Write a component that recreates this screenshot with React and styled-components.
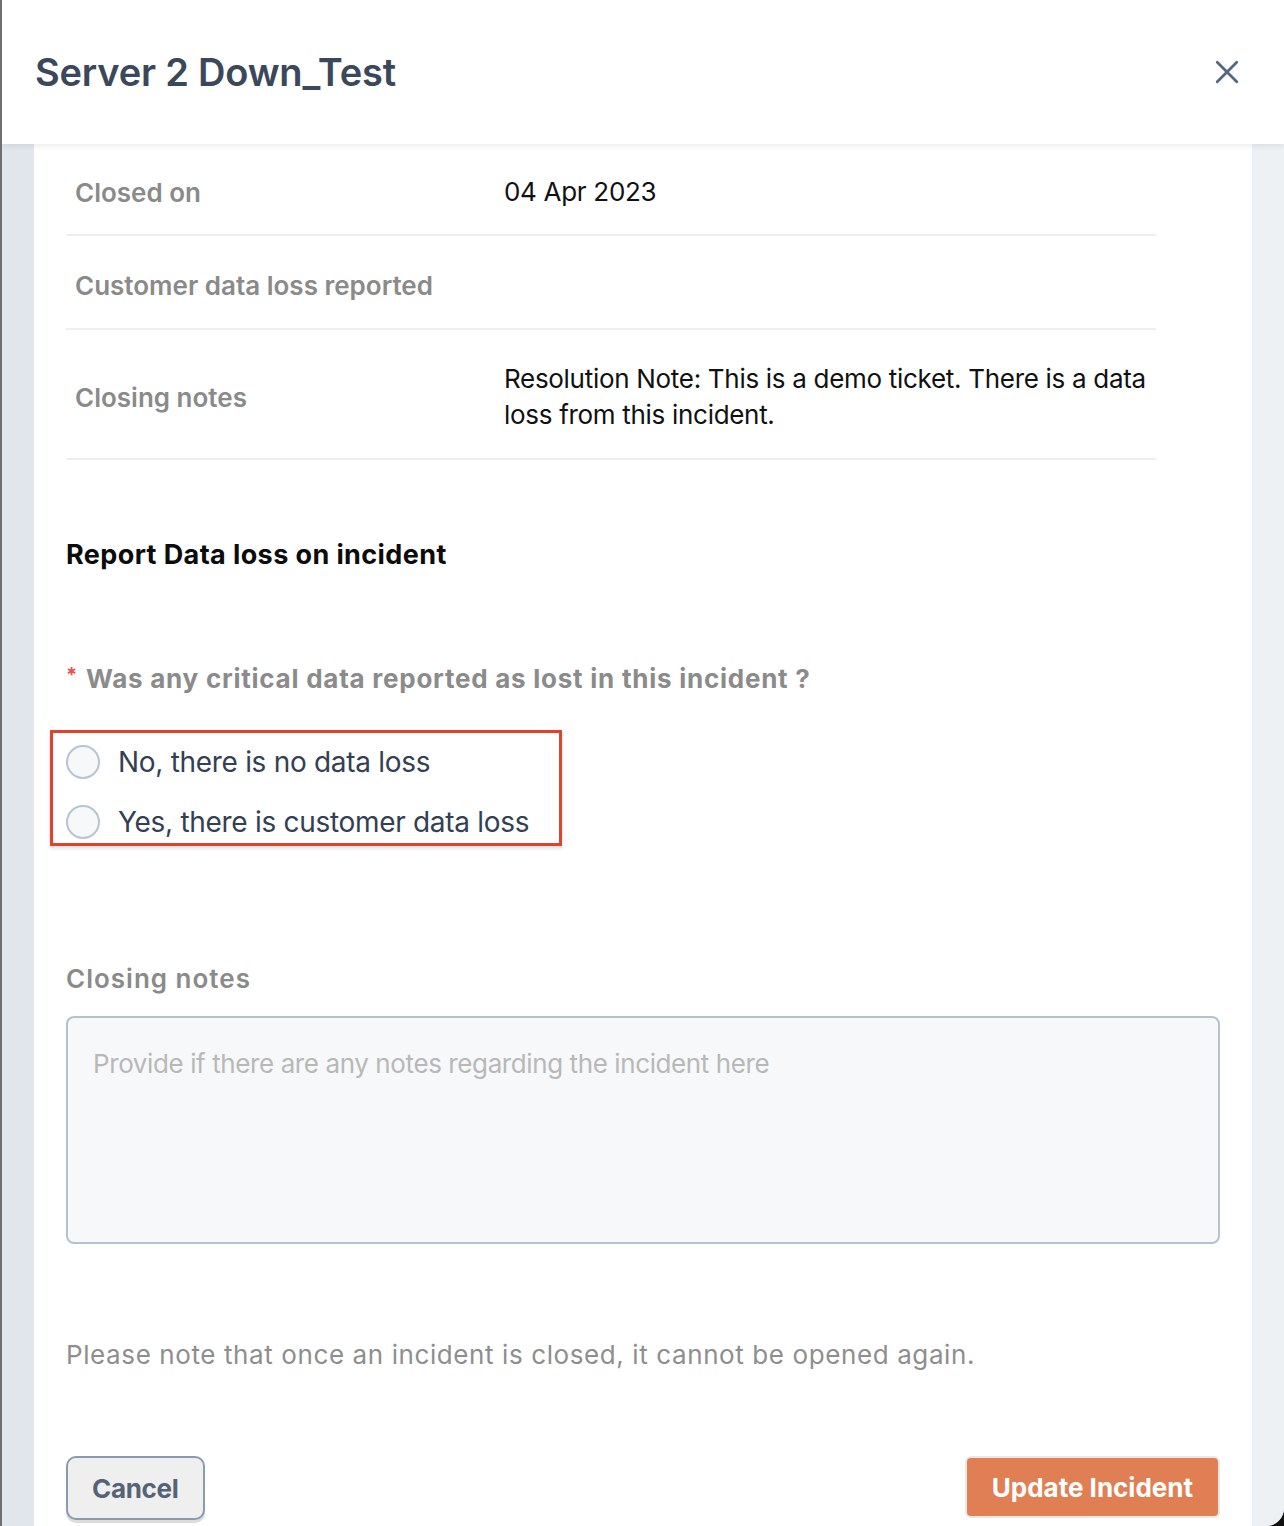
import React from "react";
import styled, { createGlobalStyle } from "styled-components";

const Global = createGlobalStyle`
  html, body {
    margin: 0;
    padding: 0;
    background: #111;
  }
  body {
    font-family: Inter, "Noto Sans", sans-serif;
    overflow: hidden;
  }
`;

const Frame = styled.div`
  width: 1284px;
  height: 1526px;
  box-sizing: border-box;
  border-left: 2px solid #6f6f6f;
  border-bottom-right-radius: 18px;
  overflow: hidden;
  background: #e6eaef;
  display: flex;
  flex-direction: column;
`;

const Header = styled.header`
  height: 144px;
  flex-shrink: 0;
  background: #fff;
  display: flex;
  align-items: center;
  justify-content: space-between;
  padding: 0 44px 0 33px;
  box-shadow: 0 2px 6px rgba(0, 0, 0, 0.08);
  position: relative;
  z-index: 2;
`;

const Title = styled.h1`
  margin: 0;
  font-size: 38px;
  font-weight: 600;
  letter-spacing: -0.2px;
  color: #3b475a;
`;

const CloseButton = styled.button`
  border: none;
  background: none;
  padding: 0;
  display: flex;
  color: #546781;
  cursor: pointer;
`;

const Side = styled.div`
  flex: 1;
  display: flex;
  padding: 0 32px;
  background: linear-gradient(90deg, #e1e6ec, #eef1f4);
`;

const Panel = styled.main`
  flex: 1;
  background: #fff;
  padding: 0 32px;
  display: flex;
  flex-direction: column;
`;

const DetailTable = styled.div`
  width: 1090px;
  display: flex;
  flex-direction: column;
`;

const Row = styled.div`
  display: grid;
  grid-template-columns: 429px 1fr;
  align-items: center;
  min-height: ${(p) => p.$h}px;
  border-bottom: 2px solid #efefef;
  box-sizing: border-box;
  padding: 6px 0 0 9px;
`;

const Label = styled.span`
  font-size: 26px;
  font-weight: 600;
  letter-spacing: 0;
  color: #8a8a8a;
`;

const Value = styled.span`
  font-size: 26px;
  line-height: 36px;
  letter-spacing: -0.3px;
  color: #111;
`;

const SectionTitle = styled.h2`
  margin: 78px 0 0;
  font-size: 27px;
  font-weight: 700;
  letter-spacing: 0.4px;
  color: #0c0c0c;
`;

const Question = styled.p`
  margin: 92px 0 0;
  font-size: 26px;
  font-weight: 700;
  letter-spacing: 0.75px;
  color: #8b8b8b;
`;

const Required = styled.span`
  color: #e5534b;
  font-size: 20px;
  vertical-align: top;
  margin-right: 8px;
`;

const Highlight = styled.div`
  margin: 36px 0 0 -16px;
  width: 512px;
  height: 116px;
  box-sizing: border-box;
  border: 3px solid #e0432c;
  box-shadow: 0 2px 4px rgba(0, 0, 0, 0.15);
  display: flex;
  flex-direction: column;
  gap: 24px;
  padding: 11px 0 0 13px;
`;

const Option = styled.label`
  display: flex;
  align-items: center;
  gap: 18px;
  font-size: 28px;
  letter-spacing: -0.3px;
  color: #333f52;
  height: 36px;
`;

const Circle = styled.span`
  width: 34px;
  height: 34px;
  box-sizing: border-box;
  border-radius: 50%;
  border: 2px solid #b7c4d2;
  background: #f6f8fa;
  flex-shrink: 0;
`;

const FieldLabel = styled.div`
  margin-top: 117px;
  font-size: 26px;
  font-weight: 600;
  letter-spacing: 1px;
  color: #8a8a8a;
`;

const Notes = styled.textarea`
  margin-top: 22px;
  width: 1154px;
  height: 228px;
  box-sizing: border-box;
  border: 2px solid #b4c2d0;
  border-radius: 8px;
  background: #f6f8fa;
  padding: 30px 25px;
  font-family: Inter, sans-serif;
  font-size: 26px;
  letter-spacing: -0.4px;
  resize: none;
  outline: none;
  &::placeholder {
    color: #b8b8b8;
  }
`;

const Note = styled.p`
  margin: 95px 0 0;
  font-size: 26px;
  letter-spacing: 0.6px;
  color: #8e8e8e;
`;

const Actions = styled.div`
  margin-top: 86px;
  width: 1154px;
  display: flex;
  justify-content: space-between;
  align-items: flex-start;
`;

const Button = styled.button`
  height: ${(p) => (p.$primary ? 62 : 64)}px;
  padding: 0 ${(p) => (p.$primary ? 25 : 24)}px;
  border-radius: ${(p) => (p.$primary ? 6 : 10)}px;
  border: ${(p) => (p.$primary ? "2px solid #e8e8e8" : "2px solid #8a9bb0")};
  background: ${(p) => (p.$primary ? "#e07f54" : "#efefef")};
  color: ${(p) => (p.$primary ? "#fff" : "#546377")};
  font-family: Inter, sans-serif;
  font-size: 26px;
  font-weight: 700;
  letter-spacing: ${(p) => (p.$primary ? "0" : "-0.3px")};
  box-shadow: ${(p) => (p.$primary ? "none" : "0 3px 0 #dcdcdc")};
  cursor: pointer;
`;

export default function App() {
  return (
    <>
      <Global />
      <Frame>
        <Header>
          <Title>Server 2 Down_Test</Title>
          <CloseButton aria-label="Close">
            <svg width="26" height="26" viewBox="0 0 24 24" fill="none" stroke="currentColor" strokeWidth="2.6" strokeLinecap="round">
              <path d="M3 3l18 18M21 3L3 21" />
            </svg>
          </CloseButton>
        </Header>
        <Side>
          <Panel>
            <DetailTable>
              <Row $h={92}>
                <Label>Closed on</Label>
                <Value>04 Apr 2023</Value>
              </Row>
              <Row $h={94}>
                <Label>Customer data loss reported</Label>
                <Value />
              </Row>
              <Row $h={130}>
                <Label>Closing notes</Label>
                <Value>Resolution Note: This is a demo ticket. There is a data loss from this incident.</Value>
              </Row>
            </DetailTable>
            <SectionTitle>Report Data loss on incident</SectionTitle>
            <Question>
              <Required>*</Required>Was any critical data reported as lost in this incident ?
            </Question>
            <Highlight>
              <Option>
                <Circle />
                No, there is no data loss
              </Option>
              <Option>
                <Circle />
                Yes, there is customer data loss
              </Option>
            </Highlight>
            <FieldLabel>Closing notes</FieldLabel>
            <Notes placeholder="Provide if there are any notes regarding the incident here" />
            <Note>Please note that once an incident is closed, it cannot be opened again.</Note>
            <Actions>
              <Button>Cancel</Button>
              <Button $primary>Update Incident</Button>
            </Actions>
          </Panel>
        </Side>
      </Frame>
    </>
  );
}
